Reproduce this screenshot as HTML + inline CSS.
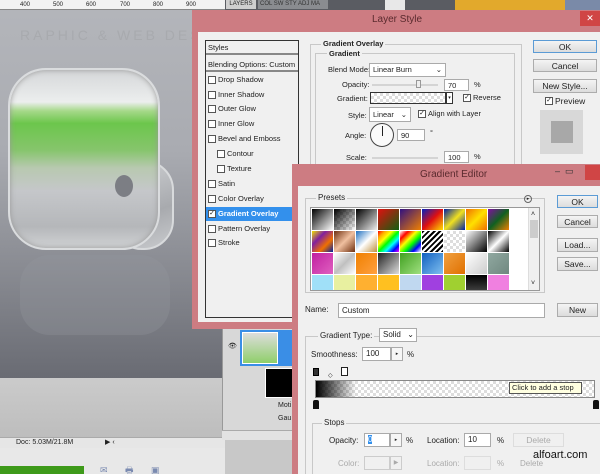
<!DOCTYPE html>
<html style="width:600px;height:474px;overflow:hidden"><head><meta charset="utf-8"><style>
*{margin:0;padding:0;box-sizing:border-box}
body{width:600px;height:474px;overflow:hidden;position:relative;font-family:"Liberation Sans",sans-serif;font-size:7.5px;color:#222;background:#c8c8c8}
.a{position:absolute}
.t{position:absolute;white-space:nowrap;line-height:10px}
.btn{position:absolute;background:linear-gradient(#f4f4f4,#dcdcdc);border:1px solid #acacac;text-align:center;font-size:8.5px;line-height:12px}
.cb{position:absolute;width:8px;height:8px;border:1px solid #555;background:#fff}
.inp{position:absolute;background:#fff;border:1px solid #aaa;font-size:7.5px;padding-left:3px;line-height:11px}
.chk{background-image:linear-gradient(45deg,#ddd 25%,transparent 25%,transparent 75%,#ddd 75%),linear-gradient(45deg,#ddd 25%,transparent 25%,transparent 75%,#ddd 75%);background-size:6px 6px;background-position:0 0,3px 3px;background-color:#fff}
.grp{position:absolute;border:1px solid #c8c8c8}
.gl{position:absolute;background:#f0f0f0;padding:0 2px;font-weight:bold;font-size:7.5px;line-height:9px}
.sw{position:absolute;width:21px;height:21px}
</style></head><body>

<!-- canvas -->
<div class="a" style="left:0;top:0;width:225px;height:378px;background:linear-gradient(180deg,#b4b6bb 0%,#a9abb1 40%,#85878e 75%,#696b73 100%)"></div>
<div class="a" style="left:0;top:378px;width:225px;height:59px;background:linear-gradient(#cbcbcb,#bdbdbd)"></div>
<div class="a" style="left:0;top:0;width:225px;height:10px;background:#f2f2f2;border-bottom:1px solid #888"></div>
<div class="t" style="left:20px;top:0;font-size:6px">400</div><div class="t" style="left:53px;top:0;font-size:6px">500</div><div class="t" style="left:86px;top:0;font-size:6px">600</div><div class="t" style="left:120px;top:0;font-size:6px">700</div><div class="t" style="left:153px;top:0;font-size:6px">800</div><div class="t" style="left:186px;top:0;font-size:6px">900</div>
<div class="t" style="left:20px;top:30px;font-size:14px;color:#a8aaae;letter-spacing:3px">RAPHIC &amp; WEB DESI</div>
<!-- glass icon -->
<div class="a" style="left:112px;top:160px;width:62px;height:90px;border-radius:30px;background:linear-gradient(160deg,#d0d2d5,#a8aaae 60%,#c8cacd);border:2px solid #d8dadc"></div>
<div class="a" style="left:8px;top:68px;width:152px;height:182px;border-radius:38px;background:linear-gradient(180deg,#d5d7d9 0%,#eceeee 18%,#a6d98a 23%,#6cc64c 30%,#86c56c 45%,#b8c9b0 55%,#c5c7ca 68%,#b5b7ba 88%,#d0d2d4 100%);border:2px solid #dadcde;box-shadow:0 0 6px #999 inset"></div>
<div class="a" style="left:115px;top:175px;width:18px;height:22px;border-radius:50%;background:#7c7e84"></div>
<div class="a" style="left:20px;top:255px;width:150px;height:80px;border-radius:30px;background:rgba(150,152,158,.3)"></div>

<!-- status bar -->
<div class="a" style="left:0;top:437px;width:225px;height:11px;background:#e6e6e6;border-top:1px solid #aaa"></div>
<div class="t" style="left:16px;top:438px;font-size:7px">Doc: 5.03M/21.8M</div>
<div class="t" style="left:105px;top:438px;font-size:7px">▶ ‹</div>
<div class="a" style="left:0;top:448px;width:225px;height:26px;background:#e8e8e8"></div>
<div class="a" style="left:0;top:466px;width:84px;height:8px;background:#3e9a1a"></div>
<div class="t" style="left:100px;top:465px;color:#7a8ab0;font-size:9px">✉&nbsp;&nbsp;&nbsp;&nbsp;&nbsp;&nbsp;&nbsp;🖶&nbsp;&nbsp;&nbsp;&nbsp;&nbsp;&nbsp;&nbsp;▣</div>

<!-- layers panel -->
<div class="a" style="left:222px;top:328px;width:72px;height:112px;background:#d8d8d8;border-left:1px solid #999"></div>
<div class="a" style="left:240px;top:330px;width:52px;height:36px;background:#3a8ee6"></div>
<div class="a" style="left:242px;top:332px;width:36px;height:32px;background:linear-gradient(#ddd,#8fcf6a);border:1px solid #fff"></div>
<div class="a" style="left:265px;top:368px;width:29px;height:30px;background:#000;border:1px solid #fff"></div>
<div class="t" style="left:278px;top:401px;font-size:7px">Moti</div>
<div class="t" style="left:278px;top:414px;font-size:7px">Gau</div>
<div class="t" style="left:228px;top:342px;font-size:7px">👁</div>
<div class="a" style="left:222px;top:430px;width:72px;height:10px;background:#e2e2e2;border-top:1px solid #aaa"></div>

<!-- top bar -->
<div class="a" style="left:225px;top:0;width:375px;height:10px;background:#5a5c62"></div>
<div class="a" style="left:226px;top:0;width:30px;height:9px;background:#cfcfcf;font-size:6px;line-height:9px;text-align:center">LAYERS</div>
<div class="a" style="left:258px;top:0;width:70px;height:9px;background:#8a8c90;font-size:6px;line-height:9px;color:#333;padding-left:2px">COL SW STY ADJ MA</div>
<div class="a" style="left:385px;top:0;width:20px;height:10px;background:#e8e8e8"></div>
<div class="a" style="left:455px;top:0;width:110px;height:10px;background:#e2a92c"></div>
<div class="a" style="left:565px;top:0;width:35px;height:10px;background:#7a8aa8"></div>

<!-- Layer Style dialog -->
<div class="a" style="left:192px;top:10px;width:410px;height:319px;background:#cd7c82"></div>
<div class="t" style="left:372px;top:15px;font-size:10px;color:#5a2a2e">Layer Style</div>
<div class="a" style="left:580px;top:11px;width:20px;height:15px;background:#d04545;color:#fff;text-align:center;font-size:9px;line-height:15px">✕</div>
<div class="a" style="left:198px;top:32px;width:402px;height:290px;background:#f0f0f0"></div>
<div class="a" style="left:205px;top:40px;width:94px;height:278px;background:#f0f0f0;border:1px solid #333"></div>
<div class="a" style="left:206px;top:41px;width:92px;height:14px;border-bottom:2px solid #888"></div>
<div class="t" style="left:208px;top:43px">Styles</div>
<div class="a" style="left:206px;top:57px;width:92px;height:15px;border-bottom:2px solid #888"></div>
<div class="t" style="left:208px;top:60px">Blending Options: Custom</div>
<div class="cb" style="left:208px;top:76px"></div><div class="t" style="left:218px;top:75px">Drop Shadow</div>
<div class="cb" style="left:208px;top:91px"></div><div class="t" style="left:218px;top:90px">Inner Shadow</div>
<div class="cb" style="left:208px;top:105px"></div><div class="t" style="left:218px;top:104px">Outer Glow</div>
<div class="cb" style="left:208px;top:120px"></div><div class="t" style="left:218px;top:119px">Inner Glow</div>
<div class="cb" style="left:208px;top:135px"></div><div class="t" style="left:218px;top:134px">Bevel and Emboss</div>
<div class="cb" style="left:217px;top:150px"></div><div class="t" style="left:227px;top:149px">Contour</div>
<div class="cb" style="left:217px;top:165px"></div><div class="t" style="left:227px;top:164px">Texture</div>
<div class="cb" style="left:208px;top:180px"></div><div class="t" style="left:218px;top:179px">Satin</div>
<div class="cb" style="left:208px;top:195px"></div><div class="t" style="left:218px;top:194px">Color Overlay</div>
<div class="a" style="left:206px;top:207px;width:86px;height:14px;background:#3390ec"></div>
<div class="cb" style="left:208px;top:210px;font-size:7px;line-height:6px;text-align:center">✓</div><div class="t" style="left:218px;top:209px;color:#fff;font-weight:bold">Gradient Overlay</div>
<div class="cb" style="left:208px;top:225px"></div><div class="t" style="left:218px;top:224px">Pattern Overlay</div>
<div class="cb" style="left:208px;top:239px"></div><div class="t" style="left:218px;top:238px">Stroke</div>

<div class="grp" style="left:310px;top:44px;width:212px;height:130px"></div>
<div class="gl" style="left:321px;top:39px">Gradient Overlay</div>
<div class="grp" style="left:315px;top:53px;width:200px;height:120px"></div>
<div class="gl" style="left:327px;top:49px">Gradient</div>
<div class="t" style="left:328px;top:65px">Blend Mode:</div>
<div class="inp" style="left:369px;top:63px;width:77px;height:14px;line-height:12px">Linear Burn<span style="float:right;padding-right:3px">⌄</span></div>
<div class="t" style="left:342px;top:80px">Opacity:</div>
<div class="a" style="left:372px;top:84px;width:66px;height:2px;background:#d4d4d4"></div>
<div class="a" style="left:416px;top:80px;width:5px;height:8px;border:1px solid #999;background:#eee"></div>
<div class="inp" style="left:444px;top:79px;width:25px;height:12px">70</div><div class="t" style="left:474px;top:80px">%</div>
<div class="t" style="left:337px;top:94px">Gradient:</div>
<div class="a chk" style="left:370px;top:92px;width:76px;height:12px;border:1px solid #333"></div>
<div class="a" style="left:446px;top:92px;width:7px;height:12px;border:1px solid #333;background:#fff;font-size:5px;text-align:center;line-height:10px">▾</div>
<div class="cb" style="left:463px;top:94px;font-size:7px;line-height:6px;text-align:center">✓</div><div class="t" style="left:473px;top:93px">Reverse</div>
<div class="t" style="left:348px;top:111px">Style:</div>
<div class="inp" style="left:369px;top:107px;width:42px;height:15px;line-height:13px">Linear<span style="float:right;padding-right:3px">⌄</span></div>
<div class="cb" style="left:418px;top:110px;font-size:7px;line-height:6px;text-align:center">✓</div><div class="t" style="left:428px;top:109px">Align with Layer</div>
<div class="t" style="left:345px;top:131px">Angle:</div>
<div class="a" style="left:370px;top:123px;width:24px;height:24px;border-radius:50%;border:1px solid #444;background:#fafafa"></div>
<div class="a" style="left:381.5px;top:126px;width:1px;height:10px;background:#222"></div>
<div class="inp" style="left:397px;top:129px;width:28px;height:12px">90</div><div class="t" style="left:430px;top:128px">°</div>
<div class="t" style="left:346px;top:153px">Scale:</div>
<div class="a" style="left:372px;top:157px;width:66px;height:2px;background:#d4d4d4"></div>
<div class="inp" style="left:444px;top:151px;width:25px;height:12px">100</div><div class="t" style="left:474px;top:152px">%</div>

<div class="btn" style="left:533px;top:40px;width:64px;height:13px;border-color:#5b9bd5">OK</div>
<div class="btn" style="left:533px;top:59px;width:64px;height:13px">Cancel</div>
<div class="btn" style="left:533px;top:79px;width:64px;height:14px">New Style...</div>
<div class="cb" style="left:545px;top:97px;font-size:7px;line-height:6px;text-align:center">✓</div><div class="t" style="left:555px;top:96px;font-size:8.5px">Preview</div>
<div class="a" style="left:540px;top:110px;width:43px;height:44px;background:#d8d8d8"></div>
<div class="a" style="left:551px;top:121px;width:22px;height:22px;background:#a8a8a8"></div>

<!-- Gradient Editor -->
<div class="a" style="left:292px;top:164px;width:310px;height:310px;background:#cd7c82"></div>
<div class="t" style="left:420px;top:170px;font-size:10px;color:#5a2a2e">Gradient Editor</div>
<div class="t" style="left:555px;top:166px;font-size:9px;color:#333">–&nbsp;&nbsp;▭</div>
<div class="a" style="left:585px;top:165px;width:17px;height:15px;background:#d04545"></div>
<div class="a" style="left:298px;top:186px;width:304px;height:288px;background:#f0f0f0"></div>
<div class="grp" style="left:305px;top:198px;width:240px;height:95px"></div>
<div class="gl" style="left:316px;top:193px;font-weight:normal;font-size:8px">Presets</div>
<div class="a" style="left:524px;top:195px;width:8px;height:8px;border-radius:50%;border:1px solid #666;font-size:5px;line-height:6px;text-align:center">▸</div>
<div class="a" style="left:310px;top:207px;width:230px;height:84px;background:#fff;border:1px solid #999;overflow:hidden">
 <div class="sw" style="left:1px;top:1px;background:linear-gradient(135deg,#000,#fff)"></div>
 <div class="sw chk" style="left:23px;top:1px"><div style="width:100%;height:100%;background:linear-gradient(135deg,#000,transparent)"></div></div>
 <div class="sw" style="left:45px;top:1px;background:linear-gradient(135deg,#000,#eee)"></div>
 <div class="sw" style="left:67px;top:1px;background:linear-gradient(135deg,#e01010,#106010)"></div>
 <div class="sw" style="left:89px;top:1px;background:linear-gradient(135deg,#301080,#f08000)"></div>
 <div class="sw" style="left:111px;top:1px;background:linear-gradient(135deg,#0020c0,#e01010,#ffe000)"></div>
 <div class="sw" style="left:133px;top:1px;background:linear-gradient(135deg,#0020a0,#f0e020,#0020a0)"></div>
 <div class="sw" style="left:155px;top:1px;background:linear-gradient(135deg,#f07000,#ffe000,#f07000)"></div>
 <div class="sw" style="left:177px;top:1px;background:linear-gradient(135deg,#8010a0,#106020,#f08000)"></div>
 <div class="sw" style="left:1px;top:23px;background:linear-gradient(135deg,#f0e000,#8020a0,#f07000,#0020a0)"></div>
 <div class="sw" style="left:23px;top:23px;background:linear-gradient(135deg,#703010,#f0c0a0,#703010)"></div>
 <div class="sw" style="left:45px;top:23px;background:linear-gradient(135deg,#2070c0,#fff,#c09040)"></div>
 <div class="sw" style="left:67px;top:23px;background:linear-gradient(135deg,red,orange,yellow,lime,cyan,blue,magenta)"></div>
 <div class="sw" style="left:89px;top:23px;background:linear-gradient(135deg,#fff,red,yellow,lime,blue,#fff)"></div>
 <div class="sw" style="left:111px;top:23px;background:repeating-linear-gradient(135deg,#000 0 2px,#fff 2px 4px)"></div>
 <div class="sw chk" style="left:133px;top:23px"></div>
 <div class="sw" style="left:155px;top:23px;background:linear-gradient(135deg,#fff,#000)"></div>
 <div class="sw" style="left:177px;top:23px;background:linear-gradient(135deg,#000,#fff,#000)"></div>
 <div class="sw" style="left:1px;top:45px;background:linear-gradient(135deg,#c020a0,#e060c0)"></div>
 <div class="sw" style="left:23px;top:45px;background:linear-gradient(135deg,#fff,#c0c0c0,#fff)"></div>
 <div class="sw" style="left:45px;top:45px;background:linear-gradient(135deg,#f08000,#ffa040)"></div>
 <div class="sw" style="left:67px;top:45px;background:linear-gradient(135deg,#222,#ddd)"></div>
 <div class="sw" style="left:89px;top:45px;background:linear-gradient(135deg,#40a020,#a0e080)"></div>
 <div class="sw" style="left:111px;top:45px;background:linear-gradient(135deg,#1060c0,#80c0f0)"></div>
 <div class="sw" style="left:133px;top:45px;background:linear-gradient(135deg,#f0a040,#e07000)"></div>
 <div class="sw" style="left:155px;top:45px;background:linear-gradient(135deg,#fff,#ccc)"></div>
 <div class="sw" style="left:177px;top:45px;background:linear-gradient(135deg,#90a8a0,#708880)"></div>
 <div class="sw" style="left:1px;top:67px;background:#a0e0f8"></div>
 <div class="sw" style="left:23px;top:67px;background:#e8f0a0"></div>
 <div class="sw" style="left:45px;top:67px;background:#ffb030"></div>
 <div class="sw" style="left:67px;top:67px;background:#ffc020"></div>
 <div class="sw" style="left:89px;top:67px;background:#c0d8f0"></div>
 <div class="sw" style="left:111px;top:67px;background:#a040e0"></div>
 <div class="sw" style="left:133px;top:67px;background:#a0d030"></div>
 <div class="sw" style="left:155px;top:67px;background:linear-gradient(#000,#555)"></div>
 <div class="sw" style="left:177px;top:67px;background:#f080e0"></div>
 <div class="a" style="left:217px;top:0;width:12px;height:84px;background:#f0f0f0;border-left:1px solid #ddd"></div>
 <div class="t" style="left:220px;top:2px;font-size:7px">˄</div>
 <div class="a" style="left:219px;top:12px;width:8px;height:18px;background:#ccc"></div>
 <div class="t" style="left:220px;top:71px;font-size:7px">˅</div>
</div>
<div class="btn" style="left:557px;top:195px;width:41px;height:13px;border-color:#5b9bd5">OK</div>
<div class="btn" style="left:557px;top:215px;width:41px;height:13px">Cancel</div>
<div class="btn" style="left:557px;top:238px;width:41px;height:14px">Load...</div>
<div class="btn" style="left:557px;top:257px;width:41px;height:14px">Save...</div>
<div class="t" style="left:305px;top:305px;font-size:8px">Name:</div>
<div class="inp" style="left:338px;top:303px;width:207px;height:15px;line-height:13px;font-size:8px">Custom</div>
<div class="btn" style="left:557px;top:303px;width:41px;height:14px">New</div>

<div class="grp" style="left:305px;top:336px;width:295px;height:138px;border-right:none;border-bottom:none"></div>
<div class="t" style="left:318px;top:331px;background:#f0f0f0;padding:0 2px;font-size:8px">Gradient Type:</div>
<div class="inp" style="left:379px;top:328px;width:38px;height:14px;line-height:12px;font-size:8px">Solid<span style="float:right;padding-right:2px">⌄</span></div>
<div class="t" style="left:311px;top:350px;font-size:8px">Smoothness:</div>
<div class="inp" style="left:362px;top:347px;width:29px;height:14px;line-height:12px;font-size:8px">100</div>
<div class="a" style="left:391px;top:347px;width:12px;height:14px;border:1px solid #aaa;background:#f6f6f6;font-size:5px;text-align:center;line-height:12px">▸</div>
<div class="t" style="left:407px;top:350px;font-size:8px">%</div>
<div class="a" style="left:313px;top:368px;width:6px;height:8px;background:#333;border:1px solid #000"></div>
<div class="t" style="left:328px;top:371px;font-size:6px">◇</div>
<div class="a" style="left:341px;top:367px;width:7px;height:9px;background:#fff;border:1.5px solid #222"></div>
<div class="a chk" style="left:315px;top:380px;width:280px;height:18px;border:1px solid #888"><div style="width:40px;height:100%;background:linear-gradient(90deg,#000,rgba(0,0,0,0))"></div></div>
<div class="a" style="left:509px;top:382px;width:73px;height:12px;background:#ffffe1;border:1px solid #555;font-size:7.5px;line-height:10px;padding-left:2px">Click to add a stop</div>
<div class="a" style="left:313px;top:400px;width:6px;height:9px;background:#111;border-radius:2px 2px 0 0"></div>
<div class="a" style="left:593px;top:400px;width:6px;height:9px;background:#111;border-radius:2px 2px 0 0"></div>
<div class="grp" style="left:312px;top:423px;width:290px;height:51px;border-right:none;border-bottom:none"></div>
<div class="t" style="left:322px;top:418px;background:#f0f0f0;padding:0 2px;font-size:8px">Stops</div>
<div class="t" style="left:329px;top:436px;font-size:8px">Opacity:</div>
<div class="inp" style="left:364px;top:433px;width:26px;height:14px;line-height:12px;font-size:8px"><span style="background:#3390ec;color:#fff">0</span></div>
<div class="a" style="left:390px;top:433px;width:12px;height:14px;border:1px solid #aaa;background:#f6f6f6;font-size:5px;text-align:center;line-height:12px">▸</div>
<div class="t" style="left:406px;top:436px;font-size:8px">%</div>
<div class="t" style="left:427px;top:436px;font-size:8px">Location:</div>
<div class="inp" style="left:464px;top:433px;width:27px;height:14px;line-height:12px;font-size:8px">10</div>
<div class="t" style="left:497px;top:436px;font-size:8px">%</div>
<div class="btn" style="left:513px;top:433px;width:51px;height:14px;color:#aaa;background:#f0f0f0;border-color:#ddd">Delete</div>
<div class="t" style="left:338px;top:459px;font-size:8px;color:#aaa">Color:</div>
<div class="a" style="left:364px;top:456px;width:26px;height:14px;border:1px solid #ccc"></div>
<div class="a" style="left:390px;top:456px;width:12px;height:14px;border:1px solid #ccc;color:#aaa;font-size:6px;text-align:center;line-height:12px">▶</div>
<div class="t" style="left:427px;top:459px;font-size:8px;color:#aaa">Location:</div>
<div class="a" style="left:464px;top:456px;width:27px;height:14px;border:1px solid #ddd"></div>
<div class="t" style="left:497px;top:459px;font-size:8px;color:#aaa">%</div>
<div class="t" style="left:520px;top:459px;font-size:8px;color:#aaa">Delete</div>
<div class="t" style="left:533px;top:450px;font-size:11px;color:#111">alfoart.com</div>
</body></html>
